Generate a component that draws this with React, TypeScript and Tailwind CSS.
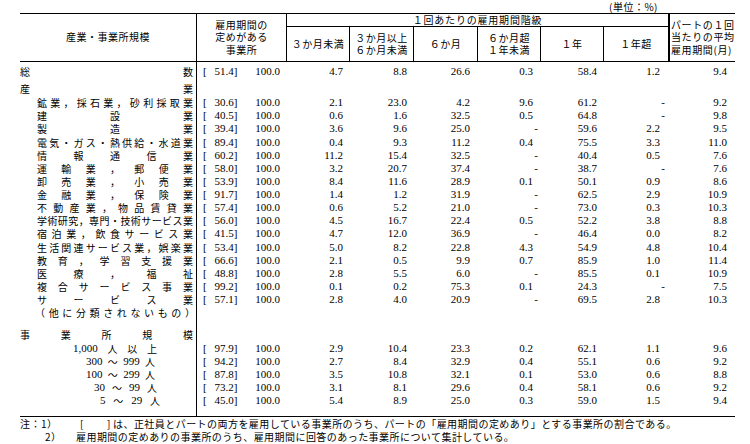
import React from "react";

const jp = "font-['Noto_Sans_CJK_JP',sans-serif]";
const num = "font-['Liberation_Serif','Noto_Sans_CJK_JP',serif]";
const cols = "grid grid-cols-[177px_90px_63px_64px_64px_63px_63px_64px_67px]";

// 各列の右余白（数値）
const pads = ["pr-[7px]", "pr-[7px]", "pr-[8px]", "pr-[8px]", "pr-[7px]", "pr-[8px]", "pr-[8px]"];

type Row = { label: string; sub?: boolean; b: string; v: string[] };

const industries: Row[] = [
  { label: "鉱業，採石業，砂利採取業", b: "30.6", v: ["2.1", "23.0", "4.2", "9.6", "61.2", "-", "9.2"] },
  { label: "建設業", b: "40.5", v: ["0.6", "1.6", "32.5", "0.5", "64.8", "-", "9.8"] },
  { label: "製造業", b: "39.4", v: ["3.6", "9.6", "25.0", "-", "59.6", "2.2", "9.5"] },
  { label: "電気・ガス・熱供給・水道業", b: "89.4", v: ["0.4", "9.3", "11.2", "0.4", "75.5", "3.3", "11.0"] },
  { label: "情報通信業", b: "60.2", v: ["11.2", "15.4", "32.5", "-", "40.4", "0.5", "7.6"] },
  { label: "運輸業，郵便業", b: "58.0", v: ["3.2", "20.7", "37.4", "-", "38.7", "-", "7.6"] },
  { label: "卸売業，小売業", b: "53.9", v: ["8.4", "11.6", "28.9", "0.1", "50.1", "0.9", "8.6"] },
  { label: "金融業，保険業", b: "91.7", v: ["1.4", "1.2", "31.9", "-", "62.5", "2.9", "10.9"] },
  { label: "不動産業，物品賃貸業", b: "57.4", v: ["0.6", "5.2", "21.0", "-", "73.0", "0.3", "10.3"] },
  { label: "学術研究，専門・技術サービス業", b: "56.0", v: ["4.5", "16.7", "22.4", "0.5", "52.2", "3.8", "8.8"] },
  { label: "宿泊業，飲食サービス業", b: "41.5", v: ["4.7", "12.0", "36.9", "-", "46.4", "0.0", "8.2"] },
  { label: "生活関連サービス業，娯楽業", b: "53.4", v: ["5.0", "8.2", "22.8", "4.3", "54.9", "4.8", "10.4"] },
  { label: "教育，学習支援業", b: "66.6", v: ["2.1", "0.5", "9.9", "0.7", "85.9", "1.0", "11.4"] },
  { label: "医療，福祉", b: "48.8", v: ["2.8", "5.5", "6.0", "-", "85.5", "0.1", "10.9"] },
  { label: "複合サービス事業", b: "99.2", v: ["0.1", "0.2", "75.3", "0.1", "24.3", "-", "7.5"] },
  { label: "サービス業", b: "57.1", v: ["2.8", "4.0", "20.9", "-", "69.5", "2.8", "10.3"] },
];

const sizes = [
  { t: ["1,000", "人", "以", "上"], ml: "ml-[53px] w-[84px]", b: "97.9", v: ["2.9", "10.4", "23.3", "0.2", "62.1", "1.1", "9.6"] },
  { t: ["300", "～", "999", "人"], ml: "ml-[66px] w-[69px]", b: "94.2", v: ["2.7", "8.4", "32.9", "0.4", "55.1", "0.6", "9.2"] },
  { t: ["100", "～", "299", "人"], ml: "ml-[66px] w-[69px]", b: "87.8", v: ["3.5", "10.8", "32.1", "0.1", "53.0", "0.6", "8.8"] },
  { t: ["30", "～", "99", "人"], ml: "ml-[74px] w-[63px]", b: "73.2", v: ["3.1", "8.1", "29.6", "0.4", "58.1", "0.6", "9.2"] },
  { t: ["5", "～", "29", "人"], ml: "ml-[80px] w-[60px]", b: "45.0", v: ["5.4", "8.9", "25.0", "0.3", "59.0", "1.5", "9.4"] },
];

const Spread = ({ text, className = "" }: { text: string; className?: string }) => (
  <div className={`flex justify-between ${className}`}>
    {[...text].map((c, i) => (
      <span key={i}>{c}</span>
    ))}
  </div>
);

const Data = ({ b, v }: { b: string; v: string[] }) => (
  <>
    <div className={`flex items-center pl-[6px] pr-[7px] ${num} text-[11px]`}>
      <span>[</span>
      <span className="w-[27px] text-right">{b}</span>
      <span>]</span>
      <span className="ml-auto">100.0</span>
    </div>
    {v.map((x, i) => (
      <div
        key={i}
        className={`flex items-center justify-end ${num} text-[11px] ${x === "-" ? "pr-[3px]" : pads[i]}`}>
        {x}
      </div>
    ))}
  </>
);

const Spacer = ({ h }: { h: string }) => (
  <div className={`${cols} ${h}`}>
    <div className="border-r border-black" />
  </div>
);

const App = () => {
  return (
    <div className={`w-[750px] h-[444px] bg-white text-black ${jp} text-[10px] overflow-hidden`}>
      <div className="ml-[20px] w-[715px]">
        <div className="h-[13px] leading-[13px] text-right pr-[77px] tracking-[0.5px]">(単位：%)</div>

        {/* 見出し */}
        <div className={`${cols} grid-rows-[13px_34px] h-[49px] border-y border-black leading-[12.5px] tracking-[0.5px]`}>
          <div className="col-start-1 row-start-1 row-span-2 border-r border-black flex items-center justify-center">
            産業・事業所規模
          </div>
          <div className="col-start-2 row-start-1 row-span-2 border-r border-black flex flex-col items-center justify-center">
            <span>雇用期間の</span>
            <span>定めがある</span>
            <span>事業所</span>
          </div>
          <div className="col-start-3 col-span-6 row-start-1 border-b border-black flex items-center justify-center tracking-[0.8px]">
            １回あたりの雇用期間階級
          </div>
          <div className="col-start-9 row-start-1 row-span-2 border-l-2 border-black flex flex-col justify-center pl-[1px] tracking-[0.6px]">
            <span>パートの１回</span>
            <span>当たりの平均</span>
            <span>雇用期間(月)</span>
          </div>
          <div className="col-start-3 row-start-2 border-r border-black flex items-center justify-center">３か月未満</div>
          <div className="col-start-4 row-start-2 border-r border-black flex flex-col items-center justify-center">
            <span>３か月以上</span>
            <span>６か月未満</span>
          </div>
          <div className="col-start-5 row-start-2 border-r border-black flex items-center justify-center">６か月</div>
          <div className="col-start-6 row-start-2 border-r border-black flex flex-col items-center justify-center">
            <span>６か月超</span>
            <span>１年未満</span>
          </div>
          <div className="col-start-7 row-start-2 border-r border-black flex items-center justify-center">１年</div>
          <div className="col-start-8 row-start-2 flex items-center justify-center">１年超</div>
        </div>

        {/* 本体 */}
        <div className="border-b border-black leading-[13px]">
          <Spacer h="h-[2.5px]" />
          <div className={`${cols} h-[13px]`}>
            <div className="border-r border-black flex items-center">
              <Spread text="総数" className="w-full pr-[3px]" />
            </div>
            <Data b="51.4" v={["4.7", "8.8", "26.6", "0.3", "58.4", "1.2", "9.4"]} />
          </div>
          <Spacer h="h-[4.5px]" />
          <div className={`${cols} h-[13.13px]`}>
            <div className="border-r border-black flex items-center">
              <Spread text="産業" className="w-full pr-[3px]" />
            </div>
          </div>
          <Spacer h="h-[1px]" />
          {industries.map((r) => (
            <div key={r.label} className={`${cols} h-[13.13px]`}>
              <div className="border-r border-black flex items-center">
                <Spread text={r.label} className="w-full pl-[17px] pr-[3px]" />
              </div>
              <Data b={r.b} v={r.v} />
            </div>
          ))}
          <div className={`${cols} h-[12px]`}>
            <div className="border-r border-black flex items-center">
              <Spread text="（他に分類されないもの）" className="w-full pl-[15px] pr-[1px]" />
            </div>
          </div>
          <Spacer h="h-[10.3px]" />
          <div className={`${cols} h-[13px]`}>
            <div className="border-r border-black flex items-center">
              <Spread text="事業所規模" className="w-full pr-[3px]" />
            </div>
          </div>
          <Spacer h="h-[1px]" />
          {sizes.map((s) => (
            <div key={s.b} className={`${cols} h-[13px]`}>
              <div className="border-r border-black flex items-center">
                <div className={`flex justify-between ${s.ml}`}>
                  {s.t.map((t, i) => (
                    <span key={i} className={/\d/.test(t) ? `${num} text-[11px]` : ""}>
                      {t}
                    </span>
                  ))}
                </div>
              </div>
              <Data b={s.b} v={s.v} />
            </div>
          ))}
          <Spacer h="h-[8.5px]" />
        </div>

        {/* 注 */}
        <div className="leading-[13.3px] tracking-[0.45px]">
          <div className="flex">
            <span className="w-[60px]">注：1）</span>
            <span className="w-[27px]">[</span>
            <span className="w-[6px]">]</span>
            <span>は、正社員とパートの両方を雇用している事業所のうち、パートの「雇用期間の定めあり」とする事業所の割合である。</span>
          </div>
          <div className="flex">
            <span className="ml-[25px] w-[31px]">2）</span>
            <span>雇用期間の定めありの事業所のうち、雇用期間に回答のあった事業所について集計している。</span>
          </div>
        </div>
      </div>
    </div>
  );
};

export default App;
